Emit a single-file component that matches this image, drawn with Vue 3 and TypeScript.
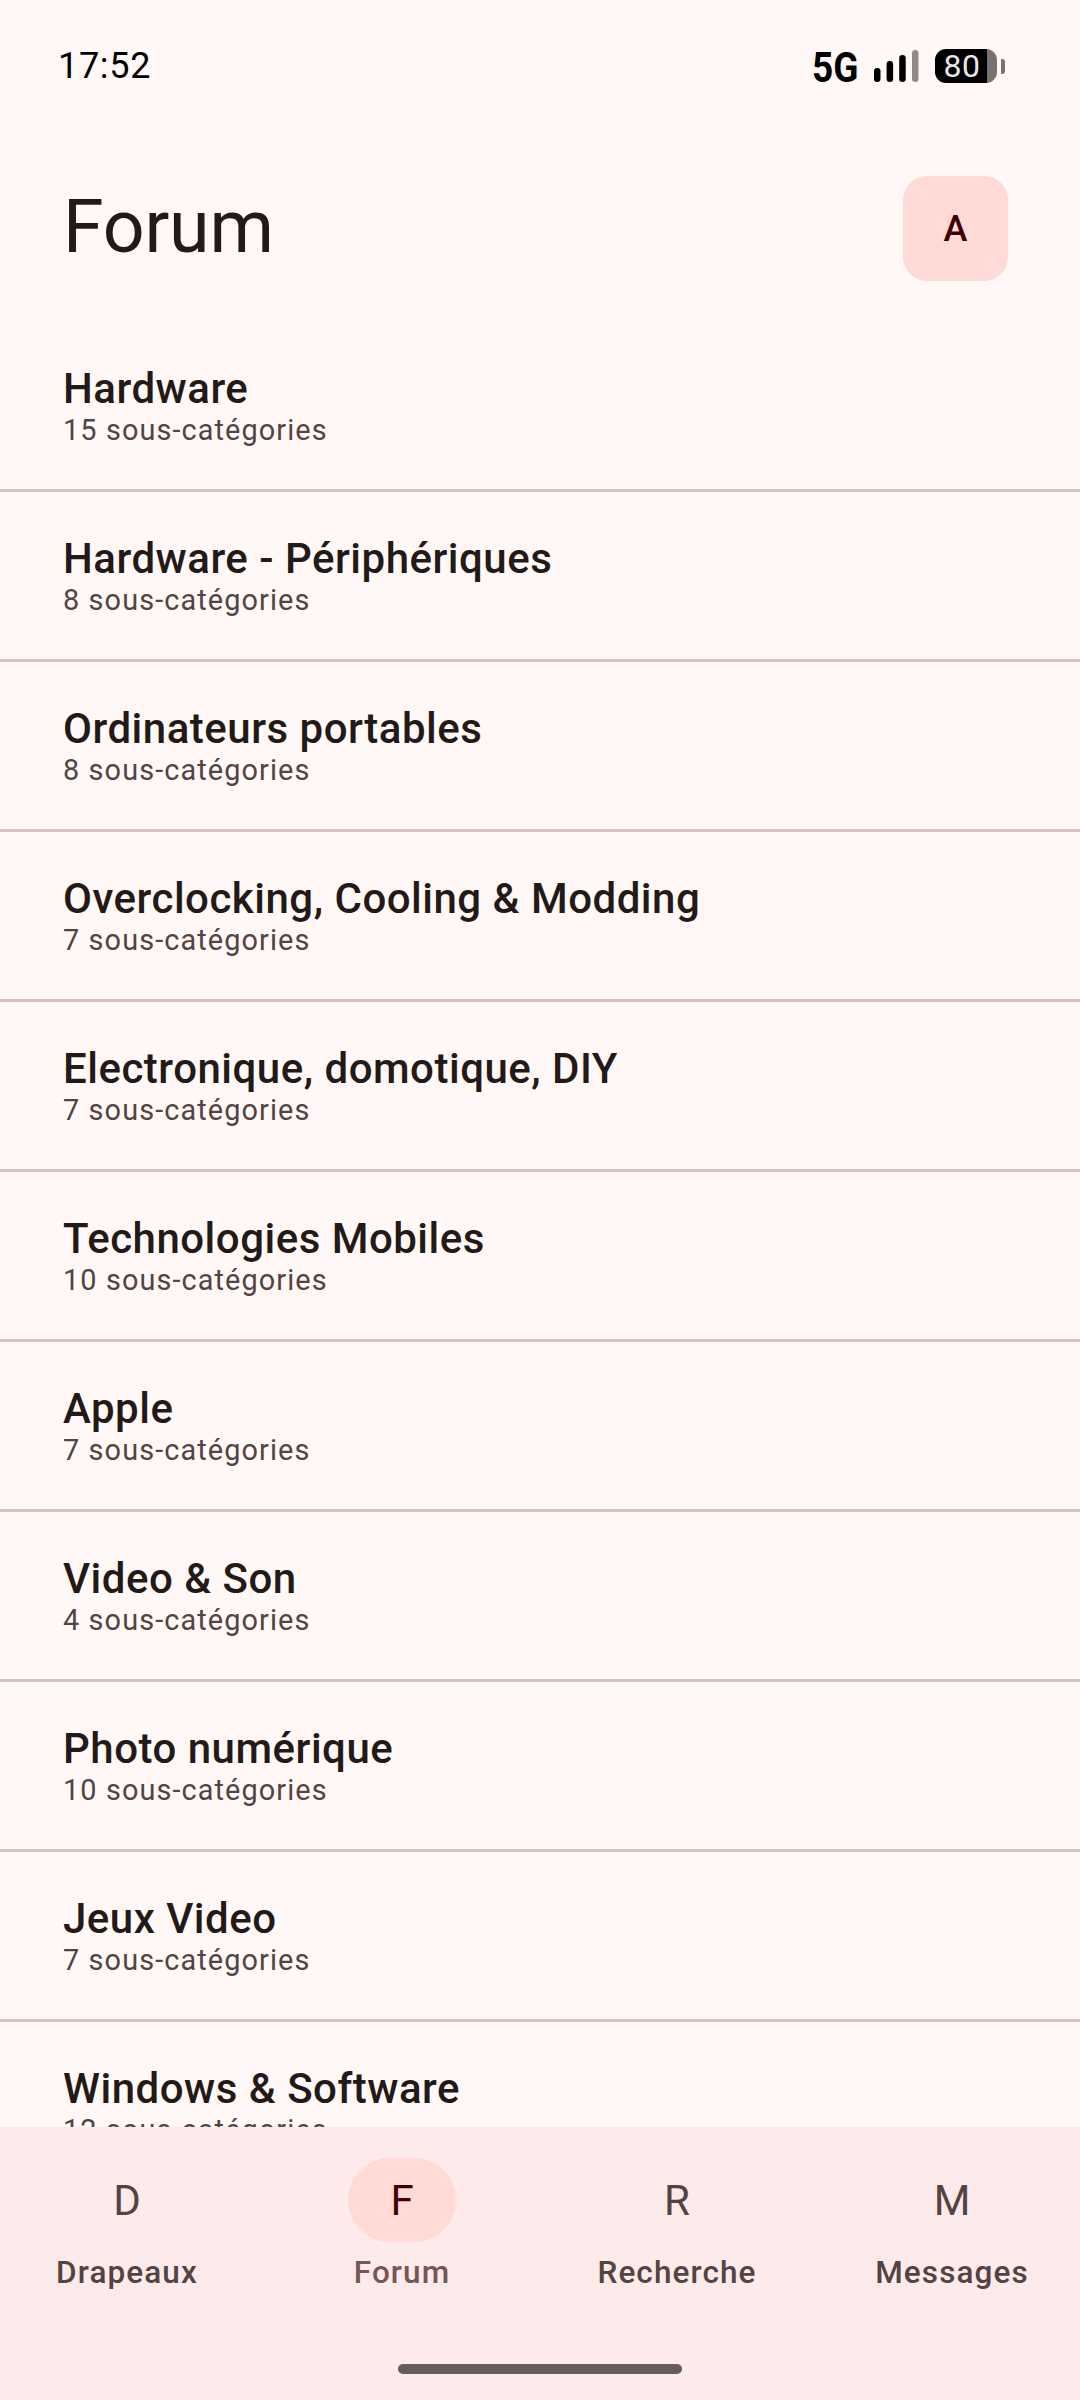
<script setup lang="ts">
interface Category { name: string; count: number }
const categories: Category[] = [
  { name: 'Hardware', count: 15 },
  { name: 'Hardware - Périphériques', count: 8 },
  { name: 'Ordinateurs portables', count: 8 },
  { name: 'Overclocking, Cooling & Modding', count: 7 },
  { name: 'Electronique, domotique, DIY', count: 7 },
  { name: 'Technologies Mobiles', count: 10 },
  { name: 'Apple', count: 7 },
  { name: 'Video & Son', count: 4 },
  { name: 'Photo numérique', count: 10 },
  { name: 'Jeux Video', count: 7 },
  { name: 'Windows & Software', count: 12 },
]
const tabs = [
  { letter: 'D', label: 'Drapeaux', active: false },
  { letter: 'F', label: 'Forum', active: true },
  { letter: 'R', label: 'Recherche', active: false },
  { letter: 'M', label: 'Messages', active: false },
]
</script>

<template>
  <div class="screen">
    <div class="status">
      <span class="time">17:52</span>
      <div class="status-right">
        <span class="net">5G</span>
        <svg class="signal" width="45" height="32" viewBox="0 0 45 32">
          <rect x="0" y="18" width="6.5" height="14" rx="3.25" fill="#000" />
          <rect x="12.6" y="11" width="6.5" height="21" rx="3.25" fill="#000" />
          <rect x="25.2" y="5" width="6.5" height="27" rx="3.25" fill="#000" />
          <rect x="38" y="0" width="6.5" height="32" rx="3.25" fill="#8e8a89" />
        </svg>
        <div class="battery">
          <div class="battery-body"><span>80</span></div>
          <div class="battery-tip"></div>
        </div>
      </div>
    </div>
    <header class="top">
      <h1>Forum</h1>
      <div class="avatar">A</div>
    </header>
    <main class="list">
      <div v-for="c in categories" :key="c.name" class="row">
        <div class="title">{{ c.name }}</div>
        <div class="sub">{{ c.count }} sous-catégories</div>
      </div>
    </main>
    <nav class="nav">
      <div class="tabs">
        <div v-for="t in tabs" :key="t.label" class="tab" :class="{ active: t.active }">
          <div class="pill">{{ t.letter }}</div>
          <div class="label">{{ t.label }}</div>
        </div>
      </div>
      <div class="home"></div>
    </nav>
  </div>
</template>

<style>
html, body { margin: 0; background: #fff8f6; }
</style>

<style scoped>
.screen {
  width: 1080px;
  height: 2400px;
  position: relative;
  overflow: hidden;
  background: #fff8f6;
  font-family: Roboto, "Liberation Sans", sans-serif;
  color: #231917;
}
.status {
  height: 130px;
  box-sizing: border-box;
  padding: 44px 75px 0 58px;
  display: flex;
  justify-content: space-between;
  align-items: flex-start;
}
.time { font-size: 36px; line-height: 42px; color: #000; letter-spacing: 0.7px; margin-top: 1px; }
.status-right { display: flex; align-items: flex-start; height: 42px; }
.net {
  font-weight: 700; font-size: 43px; line-height: 44px; color: #000;
  width: 46px; margin-right: 16px; margin-top: 1px;
  display: block; transform: scaleX(0.86); transform-origin: left center;
}
.signal { display: block; margin-top: 6px; }
.battery { display: flex; align-items: center; gap: 4px; margin-left: 16px; margin-top: 5px; }
.battery-body {
  width: 62px; height: 34px; border-radius: 11px;
  background: linear-gradient(to right, #000 0, #000 52px, #777170 52px);
  display: flex; align-items: center; justify-content: center;
  box-sizing: border-box; padding-right: 8px;
  font-size: 32px; line-height: 34px; color: #e9e7e6; letter-spacing: 0.6px;
}
.battery-tip { width: 4px; height: 15px; border-radius: 0 3px 3px 0; background: #777170; }
.top {
  height: 192px;
  padding: 0 72px 0 63px;
  display: flex;
  justify-content: space-between;
  align-items: flex-start;
}
h1 { margin: 49px 0 0; font-size: 73.5px; font-weight: 400; line-height: 96px; letter-spacing: -0.2px; }
.avatar {
  margin-top: 46px;
  width: 105px; height: 105px; border-radius: 24px;
  background: #ffdad6; color: #410002;
  display: flex; align-items: center; justify-content: center;
  font-size: 36px; font-weight: 500;
}
.row {
  height: 170px;
  box-sizing: border-box;
  padding: 44px 63px 0;
  border-bottom: 3px solid #d8c2be;
}
.title { font-size: 42px; line-height: 46px; font-weight: 550; letter-spacing: 0.5px; }
.sub { font-size: 28.875px; line-height: 36px; font-weight: 450; color: #534341; letter-spacing: 1.1px; }
.nav {
  position: absolute; left: 0; right: 0; bottom: 0; height: 273px;
  background: #fdeaea;
}
.tabs { display: grid; grid-template-columns: repeat(4, 275px); justify-content: center; padding-right: 1px; }
.tab { display: flex; flex-direction: column; align-items: center; padding-top: 31px; }
.pill {
  width: 108px; height: 84px; border-radius: 42px;
  display: flex; align-items: center; justify-content: center;
  font-size: 42px; color: #534341;
}
.active .pill { background: #ffdad6; color: #410002; }
.label { margin-top: 9px; font-size: 31.5px; line-height: 44px; font-weight: 500; color: #534341; letter-spacing: 1.1px; }
.active .label { color: #775652; }
.home {
  position: absolute; left: 398px; top: 237px; width: 284px; height: 10px;
  border-radius: 5px; background: #655c5c;
}
</style>
